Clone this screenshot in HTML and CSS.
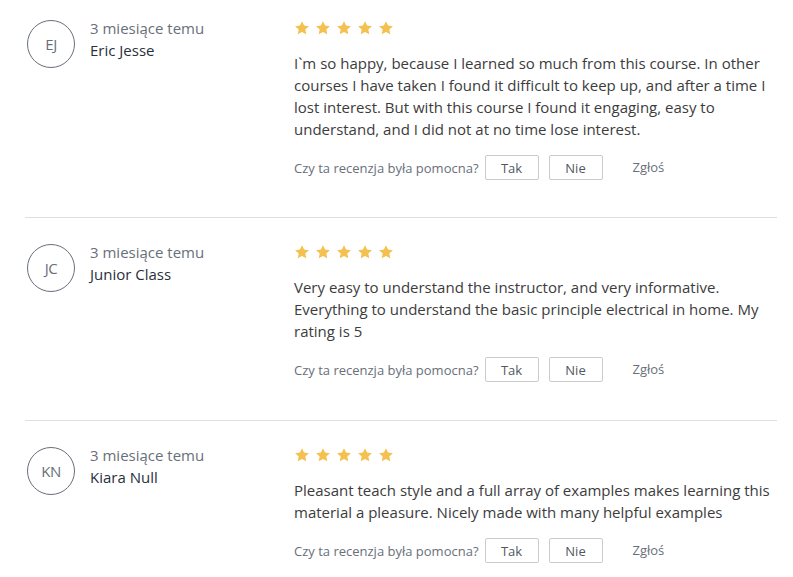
FILE: index.html
```html
<!DOCTYPE html>
<html lang="pl">
<head>
<meta charset="utf-8">
<title>Recenzje</title>
<link rel="stylesheet" href="styles.css">
</head>
<body>
<div class="reviews">
  <div class="review">
    <div class="reviewer">
      <div class="avatar">EJ</div>
      <div class="who">
        <div class="date">3 miesiące temu</div>
        <div class="name">Eric Jesse</div>
      </div>
    </div>
    <div class="content">
      <div class="stars">
        <svg class="star" viewBox="0 0 24 24"><path d="M12 1.8l3.1 6.6 7.2.9-5.3 5 1.4 7.1L12 17.9l-6.4 3.5L7 14.3l-5.3-5 7.2-.9z"/></svg>
        <svg class="star" viewBox="0 0 24 24"><path d="M12 1.8l3.1 6.6 7.2.9-5.3 5 1.4 7.1L12 17.9l-6.4 3.5L7 14.3l-5.3-5 7.2-.9z"/></svg>
        <svg class="star" viewBox="0 0 24 24"><path d="M12 1.8l3.1 6.6 7.2.9-5.3 5 1.4 7.1L12 17.9l-6.4 3.5L7 14.3l-5.3-5 7.2-.9z"/></svg>
        <svg class="star" viewBox="0 0 24 24"><path d="M12 1.8l3.1 6.6 7.2.9-5.3 5 1.4 7.1L12 17.9l-6.4 3.5L7 14.3l-5.3-5 7.2-.9z"/></svg>
        <svg class="star" viewBox="0 0 24 24"><path d="M12 1.8l3.1 6.6 7.2.9-5.3 5 1.4 7.1L12 17.9l-6.4 3.5L7 14.3l-5.3-5 7.2-.9z"/></svg>
      </div>
      <p class="text">I`m so happy, because I learned so much from this course. In other courses I have taken I found it difficult to keep up, and after a time I lost interest. But with this course I found it engaging, easy to understand, and I did not at no time lose interest.</p>
      <div class="feedback">
        <span class="question">Czy ta recenzja była pomocna?</span>
        <button class="btn">Tak</button>
        <button class="btn">Nie</button>
        <span class="report">Zgłoś</span>
      </div>
    </div>
  </div>

  <div class="review">
    <div class="reviewer">
      <div class="avatar">JC</div>
      <div class="who">
        <div class="date">3 miesiące temu</div>
        <div class="name">Junior Class</div>
      </div>
    </div>
    <div class="content">
      <div class="stars">
        <svg class="star" viewBox="0 0 24 24"><path d="M12 1.8l3.1 6.6 7.2.9-5.3 5 1.4 7.1L12 17.9l-6.4 3.5L7 14.3l-5.3-5 7.2-.9z"/></svg>
        <svg class="star" viewBox="0 0 24 24"><path d="M12 1.8l3.1 6.6 7.2.9-5.3 5 1.4 7.1L12 17.9l-6.4 3.5L7 14.3l-5.3-5 7.2-.9z"/></svg>
        <svg class="star" viewBox="0 0 24 24"><path d="M12 1.8l3.1 6.6 7.2.9-5.3 5 1.4 7.1L12 17.9l-6.4 3.5L7 14.3l-5.3-5 7.2-.9z"/></svg>
        <svg class="star" viewBox="0 0 24 24"><path d="M12 1.8l3.1 6.6 7.2.9-5.3 5 1.4 7.1L12 17.9l-6.4 3.5L7 14.3l-5.3-5 7.2-.9z"/></svg>
        <svg class="star" viewBox="0 0 24 24"><path d="M12 1.8l3.1 6.6 7.2.9-5.3 5 1.4 7.1L12 17.9l-6.4 3.5L7 14.3l-5.3-5 7.2-.9z"/></svg>
      </div>
      <p class="text">Very easy to understand the instructor, and very informative. Everything to understand the basic principle electrical in home. My rating is 5</p>
      <div class="feedback">
        <span class="question">Czy ta recenzja była pomocna?</span>
        <button class="btn">Tak</button>
        <button class="btn">Nie</button>
        <span class="report">Zgłoś</span>
      </div>
    </div>
  </div>

  <div class="review">
    <div class="reviewer">
      <div class="avatar">KN</div>
      <div class="who">
        <div class="date">3 miesiące temu</div>
        <div class="name">Kiara Null</div>
      </div>
    </div>
    <div class="content">
      <div class="stars">
        <svg class="star" viewBox="0 0 24 24"><path d="M12 1.8l3.1 6.6 7.2.9-5.3 5 1.4 7.1L12 17.9l-6.4 3.5L7 14.3l-5.3-5 7.2-.9z"/></svg>
        <svg class="star" viewBox="0 0 24 24"><path d="M12 1.8l3.1 6.6 7.2.9-5.3 5 1.4 7.1L12 17.9l-6.4 3.5L7 14.3l-5.3-5 7.2-.9z"/></svg>
        <svg class="star" viewBox="0 0 24 24"><path d="M12 1.8l3.1 6.6 7.2.9-5.3 5 1.4 7.1L12 17.9l-6.4 3.5L7 14.3l-5.3-5 7.2-.9z"/></svg>
        <svg class="star" viewBox="0 0 24 24"><path d="M12 1.8l3.1 6.6 7.2.9-5.3 5 1.4 7.1L12 17.9l-6.4 3.5L7 14.3l-5.3-5 7.2-.9z"/></svg>
        <svg class="star" viewBox="0 0 24 24"><path d="M12 1.8l3.1 6.6 7.2.9-5.3 5 1.4 7.1L12 17.9l-6.4 3.5L7 14.3l-5.3-5 7.2-.9z"/></svg>
      </div>
      <p class="text">Pleasant teach style and a full array of examples makes learning this material a pleasure. Nicely made with many helpful examples</p>
      <div class="feedback">
        <span class="question">Czy ta recenzja była pomocna?</span>
        <button class="btn">Tak</button>
        <button class="btn">Nie</button>
        <span class="report">Zgłoś</span>
      </div>
    </div>
  </div>
</div>
</body>
</html>
```

FILE: styles.css
```css
html, body {
  margin: 0;
  padding: 0;
  background: #ffffff;
}

body {
  font-family: "Open Sans", "Liberation Sans", sans-serif;
  color: #3c3c3c;
  font-size: 15px;
}

.reviews {
  margin-left: 25px;
  width: 752px;
}

.review {
  display: flex;
  padding: 24px 0 38px;
  border-bottom: 1px solid #dedfe0;
}

.review:first-child {
  padding-top: 18px;
  padding-bottom: 37px;
}

.reviewer {
  width: 269px;
  flex: none;
  display: flex;
  align-items: flex-start;
}

.avatar {
  box-sizing: border-box;
  width: 48px;
  height: 48px;
  margin: 2px 15px 0 2px;
  border: 1px solid #686f7a;
  border-radius: 50%;
  display: flex;
  align-items: center;
  justify-content: center;
  font-size: 15px;
  color: #686f7a;
  letter-spacing: -0.5px;
}

.who {
  display: flex;
  flex-direction: column;
}

.date {
  font-size: 15px;
  line-height: 21px;
  color: #686f7a;
}

.name {
  font-size: 15px;
  line-height: 22px;
  color: #29303b;
}

.content {
  flex: 1;
  min-width: 0;
}

.stars {
  display: flex;
  gap: 5px;
  height: 20px;
  align-items: center;
}

.star {
  width: 16px;
  height: 16px;
  fill: #f4c150;
}

.text {
  margin: 14px 0 0;
  font-size: 15px;
  line-height: 22px;
  color: #3c3c3c;
}

.feedback {
  display: flex;
  align-items: center;
  margin-top: 15px;
  height: 25px;
}

.question {
  font-size: 13px;
  color: #686f7a;
  margin-right: 6px;
}

.btn {
  box-sizing: border-box;
  width: 54px;
  height: 25px;
  margin: 0 10px 0 0;
  padding: 0;
  border: 1px solid #cacbcc;
  border-radius: 2px;
  background: #ffffff;
  font-family: "Open Sans", "Liberation Sans", sans-serif;
  font-size: 13px;
  color: #505763;
}

.btn + .btn {
  margin-right: 30px;
}

.report {
  font-size: 13px;
  color: #686f7a;
  margin-top: -2px;
}
```
